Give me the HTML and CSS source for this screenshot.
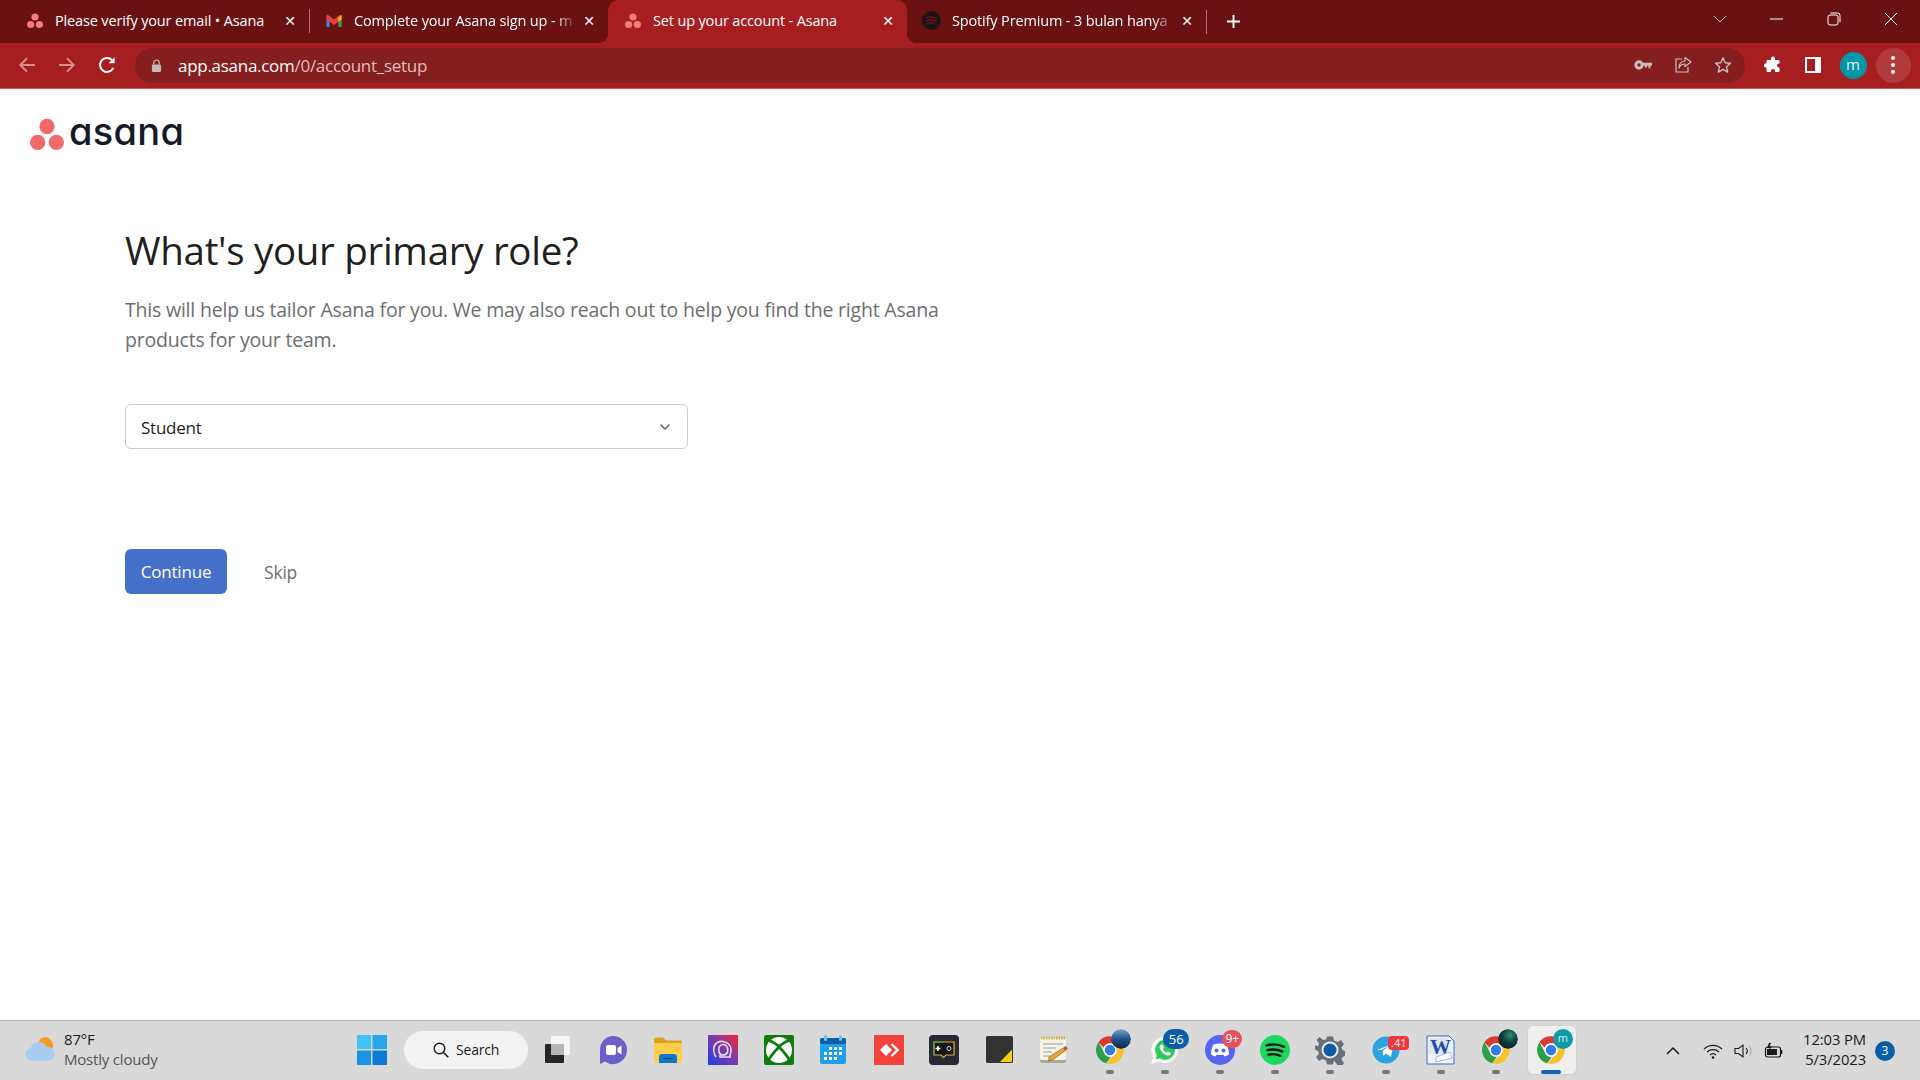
FILE: index.html
```html
<!DOCTYPE html>
<html lang="en">
<head>
    <meta charset="UTF-8">
    <title>Set up your account - Asana</title>
    <link rel="stylesheet" href="styles.css">
</head>
<body>
    <svg class="defs" width="0" height="0">
        <symbol id="asana-dots" viewBox="0 0 32 32">
            <circle cx="16" cy="8" r="7.2"/>
            <circle cx="7.2" cy="23" r="7.2"/>
            <circle cx="24.8" cy="23" r="7.2"/>
        </symbol>
        <symbol id="chrome" viewBox="0 0 48 48">
            <path fill="#db3a2e" d="M24 2a22 22 0 0 1 19 11H24a11 11 0 0 0-10.200 6.900L5.500 11.500A22 22 0 0 1 24 2z"/>
            <path fill="#2f9e48" d="M5.500 11.500l9.500 17.500a11 11 0 0 0 10 6L18 45.200A22 22 0 0 1 5.500 11.500z"/>
            <path fill="#f6c12d" d="M43 13a22 22 0 0 1-25 32.200L33.500 29.500A11 11 0 0 0 32 16l-8-3z"/>
            <circle cx="24" cy="24" r="10.500" fill="#fff"/>
            <circle cx="24" cy="24" r="8.300" fill="#2f7de2"/>
        </symbol>
    </svg>

    <div class="tabstrip">
        <div class="tab">
            <svg class="favicon dots"><use href="#asana-dots"/></svg>
            <span class="tab-title">Please verify your email • Asana</span>
            <span class="tab-close">✕</span>
        </div>
        <div class="tab with-sep">
            <svg class="favicon" viewBox="0 0 16 16">
                <path fill="#4285f4" d="M.5 3.500h3V14H1.400a.9.900 0 0 1-.9-.9z"/>
                <path fill="#34a853" d="M12.500 3.500h3v9.600a.9.900 0 0 1-.9.900h-2.100z"/>
                <path fill="#ea4335" d="M.5 2.800a1 1 0 0 1 1.600-.8L8 6.500 13.900 2a1 1 0 0 1 1.600.8V6.500L8 12 .5 6.500z"/>
                <path fill="#fbbc04" d="M12.500 4.300L15.500 2v4.500l-3 2.200z"/>
            </svg>
            <span class="tab-title">Complete your Asana sign up - m</span>
            <span class="tab-close">✕</span>
        </div>
        <div class="tab active">
            <svg class="favicon dots"><use href="#asana-dots"/></svg>
            <span class="tab-title">Set up your account - Asana</span>
            <span class="tab-close">✕</span>
        </div>
        <div class="tab">
            <svg class="favicon favicon-lg" viewBox="0 0 20 20">
                <circle cx="10" cy="10" r="10" fill="#1c1414"/>
                <path d="M4.500 7c3.500-1 7.500-.8 11 .9M5 10c3-.8 6.500-.6 9.500.8M5.600 12.800c2.500-.6 5.200-.5 7.700.7" fill="none" stroke="#6f1414" stroke-width="1.500" stroke-linecap="round"/>
            </svg>
            <span class="tab-title">Spotify Premium - 3 bulan hanya</span>
            <span class="tab-close">✕</span>
        </div>
        <div class="tab-sep"></div>
        <svg class="new-tab" viewBox="0 0 16 16"><path d="M8 1v14M1 8h14" stroke="#fff" stroke-width="2"/></svg>

        <div class="window-btns">
            <svg viewBox="0 0 14 14" class="win-chevron"><path d="M1 4l6 6 6-6" fill="none" stroke="#d8b9b9"/></svg>
            <svg viewBox="0 0 14 14"><path d="M0 7h13" stroke="#fff"/></svg>
            <svg viewBox="0 0 14 14"><rect x="1" y="3" width="10" height="10" rx="2" fill="none" stroke="#fff"/><path d="M3.500 1h7a2.500 2.500 0 0 1 2.500 2.500V10" fill="none" stroke="#fff"/></svg>
            <svg viewBox="0 0 14 14"><path d="M1 1l12 12M13 1L1 13" stroke="#fff"/></svg>
        </div>
    </div>

    <div class="toolbar">
        <div class="tool"><svg viewBox="0 0 16 16"><path d="M15 8H2M8 2L2 8l6 6" fill="none" stroke="#d98f8f" stroke-width="1.600"/></svg></div>
        <div class="tool"><svg viewBox="0 0 16 16"><path d="M1 8h13M8 2l6 6-6 6" fill="none" stroke="#d98f8f" stroke-width="1.600"/></svg></div>
        <div class="tool"><svg viewBox="0 0 16 16"><path d="M13.600 10.500A6.200 6.200 0 1 1 12.400 3.600" fill="none" stroke="#fff" stroke-width="1.800"/><path d="M14.800 1v5.400H9.400z" fill="#fff"/></svg></div>
        <div class="omnibox">
            <svg class="lock" viewBox="0 0 12 14"><path d="M3 6V4a3 3 0 0 1 6 0v2" fill="none" stroke="#c4b8b8" stroke-width="1.300"/><rect x="1" y="6" width="10" height="8" rx="1.200" fill="#c4b8b8"/></svg>
            <span class="url"><b>app.asana.com</b>/0/account_setup</span>
            <div class="omni-actions">
                <div class="tool"><svg viewBox="0 0 18 18"><circle cx="5" cy="9" r="3.200" fill="none" stroke="#cdbcbc" stroke-width="3"/><path d="M8 6.800h10v3h-1.600v2.400h-2V9.800h-1.400v1.600h-2V9.800H8z" fill="#cdbcbc"/></svg></div>
                <div class="tool"><svg viewBox="0 0 18 18"><path d="M8 3H2v13h12v-5" fill="none" stroke="#cdbcbc" stroke-width="1.200"/><path d="M11 1.500l6 4.500-6 4.500V8C8 8 6 9.500 5 12c0-4 2.500-6.700 6-7z" fill="none" stroke="#cdbcbc" stroke-width="1.200" stroke-linejoin="round"/></svg></div>
                <div class="tool"><svg viewBox="0 0 18 18"><path d="M9 1.800l2.200 4.900 5.300.5-4 3.600 1.200 5.300L9 13.300 4.300 16.100l1.200-5.300-4-3.600 5.300-.5z" fill="none" stroke="#cdbcbc" stroke-width="1.400" stroke-linejoin="round"/></svg></div>
            </div>
        </div>
        <div class="tool extras"><svg viewBox="0 0 18 18"><path fill="#fff" d="M7 2.500a2 2 0 0 1 4 0V4h3.500a1 1 0 0 1 1 1v2.500h-.5a2 2 0 0 0 0 4h.5V15a1 1 0 0 1-1 1H11v-1a2 2 0 0 0-4 0v1H3.500a1 1 0 0 1-1-1v-3.500H1.800a2 2 0 0 1 0-4h.7V5a1 1 0 0 1 1-1H7z"/></svg></div>
        <div class="tool"><svg viewBox="0 0 18 18"><rect x="1" y="1" width="16" height="16" fill="#fff"/><rect x="3" y="3" width="8" height="12" fill="#a61e1f"/></svg></div>
        <div class="tool"><span class="avatar">m</span></div>
        <div class="tool"><span class="menu-btn"><i></i><i></i><i></i></span></div>
    </div>

    <main class="page">
        <div class="logo">
            <svg class="logo-mark"><use href="#asana-dots"/></svg>
            <span class="logo-text">asana</span>
        </div>
        <div class="setup">
            <h1>What's your primary role?</h1>
            <p>This will help us tailor Asana for you. We may also reach out to help you find the right Asana products for your team.</p>
            <div class="select">
                <span>Student</span>
                <svg viewBox="0 0 12 8"><path d="M1.500 1.500L6 6l4.500-4.500" fill="none" stroke="#6d6e6f" stroke-width="1.600"/></svg>
            </div>
            <div class="actions">
                <button class="continue">Continue</button>
                <span class="skip">Skip</span>
            </div>
        </div>
    </main>

    <footer class="taskbar">
        <div class="weather">
            <svg viewBox="0 0 34 28">
                <circle cx="22" cy="10" r="8" fill="#f59a23"/>
                <path d="M8 26a6.500 6.500 0 0 1-1-12.900A8.500 8.500 0 0 1 23 12a7 7 0 0 1 3 14z" fill="#a9cdf0"/>
            </svg>
            <div class="weather-text">
                <span>87°F</span>
                <span class="muted">Mostly cloudy</span>
            </div>
        </div>

        <div class="apps">
            <div class="app">
                <svg class="icon" viewBox="0 0 30 30">
                    <rect x="0" y="0" width="14" height="14" fill="#42c3f7"/><rect x="15.500" y="0" width="14.500" height="14" fill="#25a5ee"/>
                    <rect x="0" y="15.500" width="14" height="14.500" fill="#1b93e4"/><rect x="15.500" y="15.500" width="14.500" height="14.500" fill="#0a7ad8"/>
                </svg>
            </div>
            <div class="search">
                <svg viewBox="0 0 16 16"><circle cx="6.500" cy="6.500" r="5.300" fill="none" stroke="#1a1a1a" stroke-width="1.400"/><path d="M10.500 10.500l4.800 4.800" stroke="#1a1a1a" stroke-width="1.500"/></svg>
                <span>Search</span>
            </div>
            <div class="app">
                <svg class="icon" viewBox="0 0 30 30">
                    <rect x="8" y="1" width="19" height="19" rx="1" fill="#f6f6f6"/>
                    <rect x="2" y="9" width="19" height="19" rx="1" fill="#262626"/>
                    <rect x="8" y="9" width="13" height="11" fill="#b5b5b5"/>
                </svg>
            </div>
            <div class="app">
                <svg class="icon" viewBox="0 0 30 30">
                    <path d="M15 1a14 14 0 0 1 14 14 14 14 0 0 1-22 11.500L2 29V15A13 14 0 0 1 15 1z" fill="#6a60c8"/>
                    <rect x="8" y="10" width="10" height="10" rx="2" fill="#fff"/><path d="M19.500 13l4-2.500v9l-4-2.500z" fill="#fff"/>
                </svg>
            </div>
            <div class="app">
                <svg class="icon" viewBox="0 0 30 30">
                    <path d="M1 4a1.500 1.500 0 0 1 1.500-1.500H10l3 3h14.500A1.500 1.500 0 0 1 29 7v3H1z" fill="#dca01e"/>
                    <path d="M1 8h28v18a2 2 0 0 1-2 2H3a2 2 0 0 1-2-2z" fill="#fdcd4b"/>
                    <path d="M6 22a3 3 0 0 1 3-3h12a3 3 0 0 1 3 3v6H6z" fill="#0b78c9"/>
                    <path d="M10 23.500h10" stroke="#04406e" stroke-width="1.200"/>
                </svg>
            </div>
            <div class="app">
                <svg class="icon" viewBox="0 0 30 30">
                    <defs><linearGradient id="proton" x1="0" y1="1" x2="1" y2="0"><stop offset="0" stop-color="#1c3ff0"/><stop offset=".6" stop-color="#8a3a9c"/><stop offset="1" stop-color="#f8232c"/></linearGradient></defs>
                    <rect width="30" height="30" fill="url(#proton)"/>
                    <path d="M8 22c-2-3-3-6-2-10 1-4 5-6 9-5.500 4 .5 8 3.500 8 8 0 3-1 5-1 7.500H12v-2" fill="none" stroke="#ecdcf5" stroke-width="1.600"/>
                    <path d="M11 17c-1-4 .5-7.500 4-7.500s5.500 3 4.500 7.500c-.5 2-1.500 3-4.500 3s-3.500-1-4-3z" fill="none" stroke="#ecdcf5" stroke-width="1.600"/>
                </svg>
            </div>
            <div class="app">
                <svg class="icon" viewBox="0 0 30 30">
                    <rect width="30" height="30" rx="2" fill="#107c10"/>
                    <circle cx="15" cy="15" r="13" fill="#fff"/>
                    <path d="M4 5C9 7 13 9 15 12C20 17 24 22 26 26M26 5C21 7 17 9 15 12C10 17 6 22 4 26" fill="none" stroke="#107c10" stroke-width="2.800"/>
                </svg>
            </div>
            <div class="app">
                <svg class="icon" viewBox="0 0 30 30">
                    <rect x="1" y="3" width="26" height="26" rx="2" fill="#1fa0ea"/>
                    <rect x="1" y="3" width="26" height="6" rx="2" fill="#0e5fa8"/>
                    <rect x="5" y="0" width="3" height="6" rx="1.500" fill="#5fc8ef"/><rect x="20" y="0" width="3" height="6" rx="1.500" fill="#5fc8ef"/>
                    <path d="M10 12h3v3h-3zM15 12h3v3h-3zM20 12h3v3h-3zM5 17h3v3H5zM10 17h3v3h-3zM15 17h3v3h-3zM20 17h3v3h-3zM5 22h3v3H5zM10 22h3v3h-3zM15 22h3v3h-3z" fill="#fff"/>
                </svg>
            </div>
            <div class="app">
                <svg class="icon" viewBox="0 0 30 30">
                    <rect width="30" height="30" fill="#f1433a"/>
                    <path d="M12 9l6 6-6 6-6-6z" fill="#fff"/>
                    <path d="M17.500 9l6 6-6 6" fill="none" stroke="#fff" stroke-width="2.400"/>
                </svg>
            </div>
            <div class="app">
                <svg class="icon" viewBox="0 0 30 30">
                    <rect width="30" height="30" rx="4" fill="#272a33"/>
                    <path d="M5 7h20v13H17l-2.500 2.500L12 20H5z" fill="#151515" stroke="#d8b62a" stroke-width="1.200"/>
                    <path d="M5 20V7h10" fill="none" stroke="#3c9e4a" stroke-width="1.200"/>
                    <path d="M9 11v5M6.500 13.500h5" stroke="#fff" stroke-width="1.600"/>
                    <circle cx="20" cy="13.500" r="2" fill="none" stroke="#ddd"/>
                </svg>
            </div>
            <div class="app">
                <svg class="icon icon-sm" viewBox="0 0 27 27">
                    <rect width="27" height="27" rx="1.500" fill="#333"/>
                    <path d="M26 13.500v11.500a1 1 0 0 1-1 1H14z" fill="#f5cf14"/>
                </svg>
            </div>
            <div class="app">
                <svg class="icon" viewBox="0 0 30 30">
                    <rect x="1" y="3" width="26" height="25" rx="2" fill="#a9a9a4"/>
                    <rect x="1" y="3" width="26" height="22" rx="1" fill="#f5f3e6"/>
                    <path d="M2 3h24" stroke="#c7b04a" stroke-width="3" stroke-dasharray="1.500 1"/>
                    <path d="M4 9h20M4 13h13M4 17h9M4 21h7" stroke="#9a9a9a"/>
                    <path d="M10 22l14-9 2.500 2.500-13 9.500-4 1z" fill="#e8a33d" stroke="#8c5a1a" stroke-width=".6"/>
                    <path d="M24 13l2.500-2 2.500 2.500-2.500 2z" fill="#d2473d"/>
                </svg>
            </div>
            <div class="app running">
                <svg class="icon"><use href="#chrome"/></svg>
                <svg class="profile-pic" viewBox="0 0 20 20">
                    <defs><linearGradient id="earth" x1="0" y1="0" x2="0" y2="1"><stop offset="0" stop-color="#7ca6d0"/><stop offset=".5" stop-color="#1f4f8c"/><stop offset="1" stop-color="#0f2740"/></linearGradient></defs>
                    <circle cx="10" cy="10" r="10" fill="url(#earth)"/>
                </svg>
            </div>
            <div class="app running">
                <svg class="icon" viewBox="0 0 30 30">
                    <path d="M15 2a13 13 0 0 1 0 26 13 13 0 0 1-6.500-1.800L1 29l2.500-7A13 13 0 0 1 15 2z" fill="#fff"/>
                    <path d="M15 5a10 10 0 0 1 0 20 10 10 0 0 1-5.500-1.700L5.500 24.500l1.300-4A10 10 0 0 1 15 5z" fill="#2fc95c"/>
                    <path d="M11 9.500c-1.500 1-2 3-.5 5.500s4.500 5 7 5.500c2 .3 3.500-1 3.500-2.300l-3-1.700-1.300 1.200c-1.500-.6-3-2.200-3.700-3.700l1-1.300-1.500-3.200z" fill="#fff"/>
                </svg>
                <span class="badge badge-blue">56</span>
            </div>
            <div class="app running">
                <svg class="icon" viewBox="0 0 30 30">
                    <circle cx="15" cy="15" r="15" fill="#5865f2"/>
                    <path d="M8.500 9.500c4-1.500 9-1.500 13 0 1.500 2.500 2.500 6 2.500 10-1.500 1-3 1.500-4.500 2l-1-1.800c-2.300.5-4.700.5-7 0l-1 1.800c-1.500-.5-3-1-4.500-2 0-4 1-7.500 2.500-10z" fill="#fff"/>
                    <circle cx="11.500" cy="15.500" r="2" fill="#5865f2"/><circle cx="18.500" cy="15.500" r="2" fill="#5865f2"/>
                </svg>
                <span class="badge badge-red">9+</span>
            </div>
            <div class="app running">
                <svg class="icon" viewBox="0 0 30 30">
                    <circle cx="15" cy="15" r="15" fill="#1ed760"/>
                    <path d="M6.500 10.500c5.500-1.600 12-1.200 17.500 1.400M7.500 15.200c5-1.200 10.500-.8 15 1.400M8.500 19.700c4-.9 8.500-.6 12 1.200" fill="none" stroke="#111" stroke-width="2.300" stroke-linecap="round"/>
                </svg>
            </div>
            <div class="app running">
                <svg class="icon" viewBox="0 0 30 30">
                    <path d="M12 1h6l1 4 3.500 1.500 3.500-2 3 4-2.500 3.500 1 2.500 3 1.500v4l-3 1.500-1 2.500 2.500 3.500-3 4-3.500-2L19 25l-1 4h-6l-1-4-3.500-1.500-3.500 2-3-4L4 18l-1-2.500L0 14v-4l3 .5 1-2.500L1.500 4.500l3-3 3.500 3L11 4z" fill="#67707a" transform="translate(0 .5)"/>
                    <circle cx="15" cy="15" r="8.500" fill="#e8e8e8"/>
                    <circle cx="15" cy="15" r="6.500" fill="#0f5aa8"/>
                </svg>
            </div>
            <div class="app running">
                <svg class="icon" viewBox="0 0 30 30">
                    <circle cx="15" cy="15" r="13.500" fill="#2aa3df"/>
                    <path d="M6 15L22.500 8.500 20 22l-5-3.500-2.500 2.500-1-5 7-5.500-8.500 4.500z" fill="#fff"/>
                </svg>
                <span class="badge badge-red badge-tg">.41</span>
            </div>
            <div class="app running">
                <svg class="icon" viewBox="0 0 30 30">
                    <path d="M1 1h22l5 5v23H1z" fill="#eef3fb" stroke="#3d6bb8"/>
                    <path d="M3 3h18v16H3z" fill="#dbe6f7"/>
                    <text class="word-letter" x="4" y="19">W</text>
                    <path d="M10 27l16-4-2-6-14 5z" fill="#fff" stroke="#8aa6d4" stroke-width=".8"/>
                </svg>
            </div>
            <div class="app running">
                <svg class="icon"><use href="#chrome"/></svg>
                <svg class="profile-pic" viewBox="0 0 20 20">
                    <defs><radialGradient id="aurora" cx=".6" cy=".3" r=".8"><stop offset="0" stop-color="#2c8d70"/><stop offset=".5" stop-color="#0d3b3d"/><stop offset="1" stop-color="#0a1a22"/></radialGradient></defs>
                    <circle cx="10" cy="10" r="10" fill="url(#aurora)"/>
                </svg>
            </div>
            <div class="app current">
                <svg class="icon"><use href="#chrome"/></svg>
                <span class="profile-m">m</span>
            </div>
        </div>

        <div class="tray">
            <svg class="tray-chevron" viewBox="0 0 14 8"><path d="M1 7l6-6 6 6" fill="none" stroke="#1a1a1a" stroke-width="1.500"/></svg>
            <svg class="tray-wifi" viewBox="0 0 20 16"><path d="M1 6a13 13 0 0 1 18 0M4 9a9 9 0 0 1 12 0M7 12a4.500 4.500 0 0 1 6 0" fill="none" stroke="#1a1a1a" stroke-width="1.200"/><circle cx="10" cy="14.500" r="1.300" fill="#1a1a1a"/></svg>
            <svg class="tray-vol" viewBox="0 0 20 16"><path d="M1 5.500h3.500L9 2v12l-4.500-3.500H1z" fill="none" stroke="#1a1a1a" stroke-width="1.100"/><path d="M12 5a4.500 4.500 0 0 1 0 6" fill="none" stroke="#1a1a1a" stroke-width="1.100"/><path d="M15 2.500a8.500 8.500 0 0 1 0 11" fill="none" stroke="#aaa" stroke-width="1.100"/></svg>
            <svg class="tray-battery" viewBox="0 0 20 16"><rect x="1.500" y="4" width="15" height="10" rx="2" fill="none" stroke="#1a1a1a" stroke-width="1.200"/><rect x="3" y="6" width="10" height="6" fill="#1a1a1a"/><path d="M17.500 7v4" stroke="#1a1a1a" stroke-width="1.600"/><path d="M5 0L3 5h2.500L4.500 8 8 3.500H5.500L7 0z" fill="#1a1a1a"/></svg>
            <div class="clock">
                <span>12:03 PM</span>
                <span>5/3/2023</span>
            </div>
            <span class="notif">3</span>
        </div>
    </footer>
</body>
</html>
```

FILE: styles.css
```css
* {
    box-sizing: border-box;
}

html,
body {
    height: 100%;
}

body {
    margin: 0;
    display: flex;
    flex-direction: column;
    overflow: hidden;
    background: #fff;
    font-family: "Open Sans", "Noto Sans", sans-serif;
    color: #1e1f21;
}

.defs {
    position: absolute;
}

/* browser chrome */
.tabstrip {
    height: 43px;
    flex: none;
    display: flex;
    align-items: flex-end;
    padding-left: 10px;
    background: #6a1212;
}

.tab {
    position: relative;
    width: 299px;
    height: 43px;
    display: flex;
    align-items: center;
    padding: 0 7px 2px 17px;
    color: #fff;
    font-size: 14.500px;
    letter-spacing: -0.150px;
}

.tab.active {
    background: #a61e1f;
    border-radius: 10px 10px 0 0;
}

.tab.active::before,
.tab.active::after {
    content: "";
    position: absolute;
    bottom: 0;
    width: 10px;
    height: 10px;
}

.tab.active::before {
    left: -10px;
    background: radial-gradient(circle at 0 0, transparent 10px, #a61e1f 10.500px);
}

.tab.active::after {
    right: -10px;
    background: radial-gradient(circle at 100% 0, transparent 10px, #a61e1f 10.500px);
}

.with-sep::before,
.tab-sep {
    content: "";
    width: 1px;
    height: 24px;
    background: #a8716f;
}

.with-sep::before {
    position: absolute;
    left: 0;
    top: 9px;
}

.tab-sep {
    align-self: center;
    flex: none;
}

.favicon {
    width: 16px;
    height: 16px;
    flex: none;
    margin-right: 12px;
}

.favicon-lg {
    width: 19px;
    height: 19px;
    margin: 0 11px 0 -2px;
}

.dots {
    fill: #f47c7c;
}

.tab-title {
    flex: 1;
    white-space: nowrap;
    overflow: hidden;
    -webkit-mask-image: linear-gradient(to right, #000 90%, transparent);
    mask-image: linear-gradient(to right, #000 90%, transparent);
}

.tab:first-child .tab-title,
.tab.active .tab-title {
    -webkit-mask-image: none;
    mask-image: none;
}

.tab-close {
    width: 24px;
    flex: none;
    text-align: center;
    font-size: 14px;
    font-weight: 700;
    font-family: "DejaVu Sans", sans-serif;
}

.new-tab {
    width: 15px;
    height: 15px;
    margin: 0 0 14px 19px;
}

.window-btns {
    margin-left: auto;
    height: 43px;
    display: flex;
    align-items: center;
    padding: 0 22px 5px 0;
    gap: 43px;
}

.window-btns svg {
    width: 14px;
    height: 14px;
}

.toolbar {
    height: 46px;
    flex: none;
    display: flex;
    align-items: center;
    padding: 0 7px 1px;
    background: #a61e1f;
    border-bottom: 1px solid #c9605f;
}

.tool {
    width: 40px;
    height: 35px;
    flex: none;
    display: flex;
    align-items: center;
    justify-content: center;
}

.tool svg {
    width: 18px;
    height: 18px;
}

.omnibox {
    width: 1610px;
    height: 35px;
    margin-left: 8px;
    display: flex;
    align-items: center;
    padding-left: 16px;
    border-radius: 18px;
    background: #841e1f;
    color: #e4bdbd;
    font-size: 17px;
    letter-spacing: -0.280px;
}

.lock {
    width: 11px;
    height: 13px;
    margin-right: 16px;
}

.url b {
    font-weight: 400;
    color: #fff;
}

.omni-actions {
    margin-left: auto;
    display: flex;
    padding-right: 2px;
}

.extras {
    margin-left: 8px;
}

.avatar {
    width: 27px;
    height: 27px;
    border-radius: 50%;
    background: #0097a7;
    color: #e6f6f8;
    font-size: 15px;
    line-height: 25px;
    text-align: center;
}

.menu-btn {
    width: 35px;
    height: 35px;
    display: flex;
    flex-direction: column;
    align-items: center;
    justify-content: center;
    gap: 3px;
    border-radius: 50%;
    background: rgba(255, 255, 255, 0.13);
}

.menu-btn i {
    width: 4px;
    height: 4px;
    border-radius: 50%;
    background: #fff;
}

/* asana page */
.page {
    flex: 1;
    min-height: 0;
}

.logo {
    display: flex;
    align-items: center;
    padding: 29px 0 0 30px;
}

.logo-mark {
    width: 34px;
    height: 34px;
    fill: #f06a6a;
}

.logo-text {
    margin: -8px 0 0 5px;
    font-family: "Inter", sans-serif;
    font-feature-settings: "cv11";
    font-size: 38px;
    font-weight: 500;
    line-height: 34px;
    letter-spacing: 0.300px;
    color: #151b26;
}

.setup {
    padding: 71px 0 0 125px;
}

h1 {
    margin: 0;
    font-size: 38.500px;
    font-weight: 400;
    line-height: 54px;
    letter-spacing: -0.300px;
}

.setup p {
    width: 830px;
    margin: 18px 0 0;
    font-size: 19.500px;
    line-height: 30px;
    letter-spacing: -0.200px;
    color: #6d6e6f;
}

.select {
    width: 563px;
    height: 45px;
    margin-top: 49px;
    display: flex;
    align-items: center;
    justify-content: space-between;
    padding: 1px 16px 0 15px;
    border: 1px solid #cfcbcb;
    border-radius: 6px;
    font-size: 17px;
    letter-spacing: -0.250px;
}

.select svg {
    width: 12px;
    height: 8px;
}

.actions {
    margin-top: 100px;
    display: flex;
    align-items: center;
    gap: 37px;
}

.continue {
    width: 102px;
    height: 45px;
    padding: 0;
    border: none;
    border-radius: 6px;
    background: #4570c9;
    color: #fff;
    font-family: inherit;
    font-size: 17px;
    letter-spacing: -0.200px;
}

.skip {
    font-size: 17.500px;
    letter-spacing: -0.200px;
    color: #6d6e6f;
}

/* windows taskbar */
.taskbar {
    height: 60px;
    flex: none;
    display: flex;
    align-items: center;
    border-top: 1px solid #b5b5b5;
    background: #d9d9d9;
}

.weather {
    width: 344px;
    flex: none;
    display: flex;
    align-items: center;
    padding: 0 0 4px 24px;
    gap: 7px;
}

.weather svg {
    width: 33px;
    height: 28px;
}

.weather-text {
    display: flex;
    flex-direction: column;
    font-size: 15px;
    line-height: 20px;
    letter-spacing: -0.200px;
    color: #1a1a1a;
}

.muted {
    color: #555;
}

.apps {
    display: flex;
    align-items: center;
    height: 59px;
}

.app {
    position: relative;
    width: 55.200px;
    height: 100%;
    display: flex;
    align-items: center;
    justify-content: center;
    padding-bottom: 2px;
}

.icon {
    width: 30px;
    height: 30px;
}

.icon-sm {
    width: 27px;
    height: 27px;
}

.running::after,
.current::after {
    content: "";
    position: absolute;
    left: 50%;
    bottom: 6px;
    width: 8px;
    height: 4px;
    margin-left: -4px;
    border-radius: 2px;
    background: #777;
}

.current::before {
    content: "";
    position: absolute;
    inset: 5px 3px 6px 4px;
    z-index: 0;
    border-radius: 5px;
    background: #efefef;
    box-shadow: 0 0 2px rgba(0, 0, 0, 0.12);
}

.current .icon {
    position: relative;
}

.current::after {
    width: 20px;
    margin-left: -10px;
    background: #0f65b5;
}

.search {
    width: 124px;
    height: 38px;
    margin: 0 2px 2px 5px;
    flex: none;
    display: flex;
    align-items: center;
    justify-content: center;
    gap: 7px;
    border-radius: 19px;
    background: #f3f3f3;
    font-size: 14px;
    letter-spacing: -0.200px;
    color: #1a1a1a;
}

.search svg {
    width: 16px;
    height: 16px;
}

.profile-pic,
.profile-m {
    position: absolute;
    top: 8px;
    right: 6px;
    width: 20px;
    height: 20px;
    border-radius: 50%;
}

.profile-m {
    background: #0f9aa8;
    color: #d8f2f4;
    font-size: 11px;
    line-height: 18px;
    text-align: center;
}

.badge {
    position: absolute;
    top: 9px;
    left: 30px;
    height: 18px;
    min-width: 18px;
    padding: 0 3px;
    border-radius: 9px;
    color: #fff;
    font-size: 12px;
    line-height: 18px;
    text-align: center;
}

.badge-blue {
    min-width: 26px;
    top: 8px;
    height: 20px;
    left: 26px;
    border-radius: 10px;
    line-height: 20px;
    background: #0a5ea8;
    font-size: 13px;
}

.badge-red {
    background: #e8505b;
}

.badge-tg {
    left: 30px;
    height: 14px;
    top: 15px;
    padding: 0 3px;
    border-radius: 4px;
    line-height: 14px;
    font-size: 11px;
    background: #f0353b;
}

.word-letter {
    font-family: "Liberation Serif", serif;
    font-size: 21px;
    font-weight: 700;
    fill: #1f4ea8;
}

.tray {
    margin-left: auto;
    display: flex;
    align-items: center;
    padding-right: 25px;
}

.tray svg {
    flex: none;
    height: 16px;
}

.tray-chevron {
    width: 14px;
    margin-right: 23px;
}

.tray-wifi {
    width: 20px;
    margin-right: 11px;
}

.tray-vol {
    width: 20px;
    margin-right: 10px;
}

.tray-battery {
    width: 20px;
    margin-right: 19px;
}

.clock {
    display: flex;
    flex-direction: column;
    align-items: flex-end;
    padding-bottom: 4px;
    font-size: 14.800px;
    line-height: 20px;
    letter-spacing: -0.100px;
    color: #1a1a1a;
}

.notif {
    position: relative;
    width: 20px;
    height: 20px;
    margin-left: 9px;
    border-radius: 50%;
    background: #0a5ea8;
    color: #fff;
    font-size: 12px;
    line-height: 20px;
    text-align: center;
}
```
